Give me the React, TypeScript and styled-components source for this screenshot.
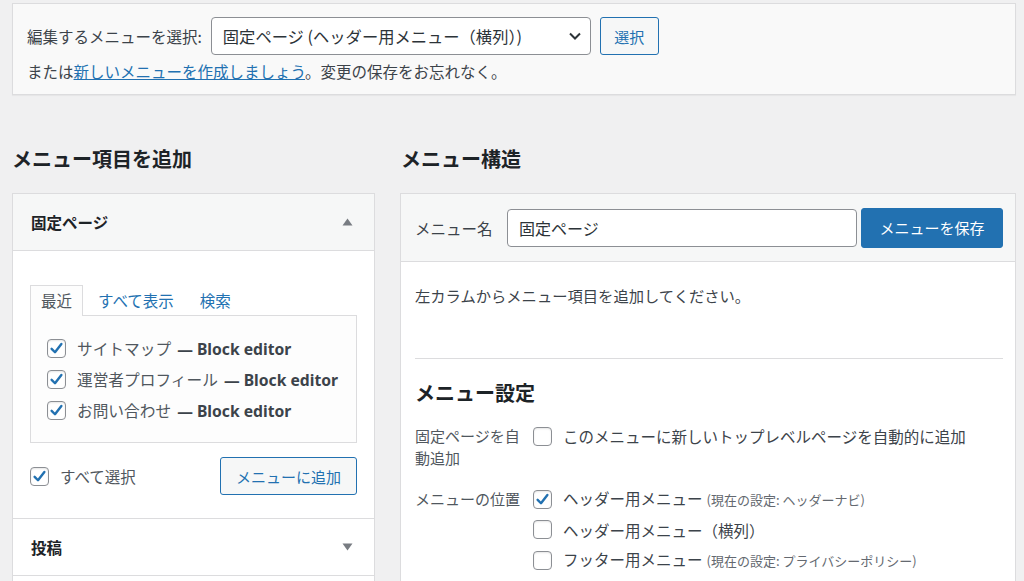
import React from "react";
import styled, { createGlobalStyle } from "styled-components";

const Global = createGlobalStyle`
  html, body { margin: 0; padding: 0; background: #f0f0f1; }
  body {
    font-family: "Noto Sans CJK JP", "Noto Sans", sans-serif;
    font-size: 15px;
    color: #3c434a;
    line-height: 22px;
  }
`;

const Page = styled.div`
  padding: 3px 8px 0 12px;
  width: 1004px;
  height: 581px;
  overflow: hidden;
  box-sizing: content-box;
`;

const TopBox = styled.div`
  border: 1px solid #dcdcde;
  background: #f9f9f9;
  padding: 13px 14px 0 14px;
  box-sizing: border-box;
  height: 92px;
  box-shadow: 0 1px 1px rgba(0,0,0,0.04);
`;

const SelectRow = styled.div`
  display: flex;
  align-items: center;
`;

const Label = styled.span<{ $mr?: number }>`
  color: #3c434a;
  white-space: nowrap;
  font-size: 15.5px;
  margin-right: ${(p) => p.$mr ?? 9}px;
`;

const SelectBox = styled.div`
  width: 380px;
  height: 38px;
  box-sizing: border-box;
  border: 1px solid #8c8f94;
  border-radius: 4px;
  background: #fff;
  display: flex;
  align-items: center;
  justify-content: space-between;
  padding: 0 8px 0 11px;
  color: #2c3338;
  font-size: 16.3px;
`;

const OutlineButton = styled.button<{ $w: number; $ml?: number }>`
  font-family: inherit;
  font-size: 15px;
  height: 38px;
  width: ${(p) => p.$w}px;
  margin-left: ${(p) => p.$ml ?? 0}px;
  border: 1px solid #2271b1;
  border-radius: 3px;
  background: #f6f7f7;
  color: #2271b1;
  box-sizing: border-box;
  cursor: pointer;
`;

const Hint = styled.div`
  margin-top: 5px;
  color: #3c434a;
  font-size: 15.5px;
`;

const Link = styled.a`
  color: #2271b1;
  text-decoration: underline;
`;

const Columns = styled.div`
  display: flex;
  gap: 25px;
`;

const LeftCol = styled.div`
  width: 363px;
  flex: none;
`;

const RightCol = styled.div`
  width: 616px;
  flex: none;
`;

const ColHeading = styled.h2<{ $ml?: number }>`
  margin: 50px 0 20px ${(p) => p.$ml ?? 0}px;
  font-size: 20px;
  line-height: 28px;
  font-weight: 600;
  color: #1d2327;
`;

const Panel = styled.div`
  border: 1px solid #dcdcde;
  border-bottom: none;
  background: #fff;
`;

const SectionHeader = styled.div<{ $open?: boolean }>`
  height: 56px;
  display: flex;
  align-items: center;
  justify-content: space-between;
  padding: 0 21px 0 18px;
  background: ${(p) => (p.$open ? "#f6f7f7" : "#fff")};
  border-bottom: 1px solid #dcdcde;
  font-weight: 600;
  color: #1d2327;
  font-size: 15.5px;
`;

const SectionBody = styled.div`
  padding: 34px 17px 23px 17px;
  border-bottom: 1px solid #dcdcde;
`;

const Tabs = styled.div`
  display: flex;
  gap: 4px;
  align-items: flex-end;
`;

const Tab = styled.div<{ $active?: boolean }>`
  height: 31px;
  box-sizing: border-box;
  padding: 0 10px 2px 10px;
  display: flex;
  align-items: center;
  font-size: 15.5px;
  color: ${(p) => (p.$active ? "#50575e" : "#2271b1")};
  background: ${(p) => (p.$active ? "#fdfdfd" : "transparent")};
  border: 1px solid ${(p) => (p.$active ? "#dcdcde" : "transparent")};
  border-bottom: none;
  margin-bottom: -1px;
  position: relative;
  z-index: 1;
`;

const TabPanel = styled.div`
  border: 1px solid #dcdcde;
  background: #fdfdfd;
  padding: 17px 15px 16px 16px;
`;

const CheckRow = styled.label`
  display: flex;
  align-items: center;
  height: 31px;
  gap: 11px;
  font-size: 15.7px;
  color: #50575e;
  white-space: nowrap;
`;

const Bold = styled.b`
  font-family: "Noto Sans", "Noto Sans CJK JP", sans-serif;
  font-weight: 700;
  color: #3c434a;
  margin-left: 6px;
`;

const BoxMark = styled.span`
  width: 19px;
  height: 19px;
  flex: none;
  box-sizing: border-box;
  border: 1px solid #8c8f94;
  border-radius: 4px;
  background: #fff;
  display: inline-flex;
  align-items: center;
  justify-content: center;
  box-shadow: inset 0 1px 2px rgba(0,0,0,0.1);
`;

const ActionRow = styled.div`
  margin-top: 14px;
  display: flex;
  align-items: center;
  justify-content: space-between;
`;

const SelectAll = styled.label`
  display: flex;
  align-items: center;
  gap: 11px;
  color: #50575e;
  font-size: 15.5px;
`;

const StructHeader = styled.div`
  background: #f6f7f7;
  border-bottom: 1px solid #dcdcde;
  height: 68px;
  box-sizing: border-box;
  padding: 0 12px 0 14px;
  display: flex;
  align-items: center;
`;

const NameInput = styled.div`
  width: 350px;
  height: 38px;
  box-sizing: border-box;
  margin-left: auto;
  border: 1px solid #8c8f94;
  border-radius: 4px;
  background: #fff;
  display: flex;
  align-items: center;
  padding: 0 11px;
  color: #2c3338;
  font-size: 16px;
`;

const PrimaryButton = styled.button`
  margin-left: 4px;
  width: 142px;
  height: 40px;
  border: 1px solid #2271b1;
  border-radius: 3px;
  background: #2271b1;
  color: #fff;
  font-family: inherit;
  font-size: 15px;
`;

const StructBody = styled.div`
  padding: 22px 12px 40px 14px;
`;

const Intro = styled.div`
  font-size: 15.3px;
`;

const Separator = styled.hr`
  margin: 52px 0 0 0;
  border: none;
  border-top: 1px solid #dcdcde;
`;

const SubHeading = styled.h3`
  margin: 20px 0 18px 0;
  font-size: 20px;
  line-height: 28px;
  font-weight: 600;
  color: #1d2327;
`;

const SettingRow = styled.div`
  display: flex;
  align-items: flex-start;
  margin-bottom: 19px;
`;

const SettingLabel = styled.div`
  width: 112px;
  flex: none;
  margin-right: 6px;
  color: #50575e;
  font-size: 15px;
`;

const OptionList = styled.div`
  display: flex;
  flex-direction: column;
`;

const Option = styled.label`
  display: flex;
  align-items: center;
  height: 22px;
  margin-bottom: 8.5px;
  gap: 11px;
  color: #3c434a;
  font-size: 15.5px;
  white-space: nowrap;
`;

const Note = styled.span`
  font-size: 13px;
  color: #646970;
  margin-left: 4px;
`;

const Check = ({ checked }: { checked?: boolean }) => (
  <BoxMark>
    {checked && (
      <svg width="15" height="15" viewBox="0 0 20 20">
        <path d="M3.5 10.5 L8 15 L16.5 4" fill="none" stroke="#2271b1" strokeWidth="3.2" strokeLinecap="round" strokeLinejoin="round" />
      </svg>
    )}
  </BoxMark>
);

const Tri = ({ up }: { up?: boolean }) => (
  <svg width="11" height="8" viewBox="0 0 11 8">
    <path d={up ? "M0.5 7.5 L5.5 0.5 L10.5 7.5 Z" : "M0.5 0.5 L5.5 7.5 L10.5 0.5 Z"} fill="#787c82" />
  </svg>
);

const pages = ["サイトマップ", "運営者プロフィール", "お問い合わせ"];

export default function App() {
  return (
    <>
      <Global />
      <Page>
        <TopBox>
          <SelectRow>
            <Label>編集するメニューを選択:</Label>
            <SelectBox>
              <span>固定ページ (ヘッダー用メニュー（横列）)</span>
              <svg width="14" height="10" viewBox="0 0 14 10">
                <path d="M2 2.5 L7 7.5 L12 2.5" fill="none" stroke="#2c3338" strokeWidth="2" />
              </svg>
            </SelectBox>
            <OutlineButton $w={59} $ml={9}>選択</OutlineButton>
          </SelectRow>
          <Hint>
            または<Link href="#">新しいメニューを作成しましょう</Link>。変更の保存をお忘れなく。
          </Hint>
        </TopBox>
        <Columns>
          <LeftCol>
            <ColHeading>メニュー項目を追加</ColHeading>
            <Panel>
              <SectionHeader $open>
                <span>固定ページ</span>
                <Tri up />
              </SectionHeader>
              <SectionBody>
                <Tabs>
                  <Tab $active>最近</Tab>
                  <Tab>すべて表示</Tab>
                  <Tab>検索</Tab>
                </Tabs>
                <TabPanel>
                  {pages.map((p) => (
                    <CheckRow key={p}>
                      <Check checked />
                      <span>
                        {p}
                        <Bold>— Block editor</Bold>
                      </span>
                    </CheckRow>
                  ))}
                </TabPanel>
                <ActionRow>
                  <SelectAll><Check checked /><span>すべて選択</span></SelectAll>
                  <OutlineButton $w={137}>メニューに追加</OutlineButton>
                </ActionRow>
              </SectionBody>
              <SectionHeader>
                <span>投稿</span>
                <Tri />
              </SectionHeader>
              <SectionHeader />
            </Panel>
          </LeftCol>
          <RightCol>
            <ColHeading $ml={1}>メニュー構造</ColHeading>
            <Panel>
              <StructHeader>
                <Label $mr={0}>メニュー名</Label>
                <NameInput>固定ページ</NameInput>
                <PrimaryButton>メニューを保存</PrimaryButton>
              </StructHeader>
              <StructBody>
                <Intro>左カラムからメニュー項目を追加してください。</Intro>
                <Separator />
                <SubHeading>メニュー設定</SubHeading>
                <SettingRow>
                  <SettingLabel>固定ページを自動追加</SettingLabel>
                  <OptionList>
                    <Option><Check /><span>このメニューに新しいトップレベルページを自動的に追加</span></Option>
                  </OptionList>
                </SettingRow>
                <SettingRow>
                  <SettingLabel>メニューの位置</SettingLabel>
                  <OptionList>
                    <Option><Check checked /><span>ヘッダー用メニュー<Note>(現在の設定: ヘッダーナビ)</Note></span></Option>
                    <Option><Check /><span>ヘッダー用メニュー（横列）</span></Option>
                    <Option><Check /><span>フッター用メニュー<Note>(現在の設定: プライバシーポリシー)</Note></span></Option>
                    <Option><Check /></Option>
                  </OptionList>
                </SettingRow>
              </StructBody>
            </Panel>
          </RightCol>
        </Columns>
      </Page>
    </>
  );
}
